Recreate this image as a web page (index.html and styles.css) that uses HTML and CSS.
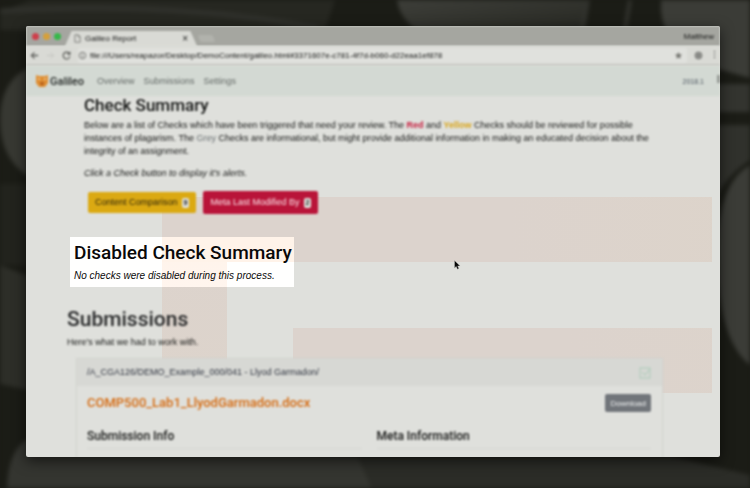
FILE: index.html
```html
<!DOCTYPE html>
<html lang="en">
<head>
<meta charset="utf-8">
<meta name="viewport" content="width=device-width, initial-scale=1">
<title>Galileo Report</title>
<link rel="stylesheet" href="styles.css">
</head>
<body>
<svg class="wallpaper" viewBox="0 0 750 488" preserveAspectRatio="none" aria-hidden="true">
  <defs>
    <linearGradient id="shade" x1="0" y1="0" x2="1" y2="1"><stop offset="0" stop-color="#3d3e39"/><stop offset="1" stop-color="#272822"/></linearGradient>
  </defs>
  <rect width="750" height="488" fill="#1b1c16"/>
  <path d="M30 0H335L325 30H0V12Z" fill="#262721"/>
  <path d="M0 11Q170 0 318 28" fill="none" stroke="#30312c" stroke-width="5"/>
  <path d="M397 0Q400 20 420 32H585L590 0Z" fill="url(#shade)"/>
  <path d="M587 0L582 30M630 0L625 30" stroke="#31322d" stroke-width="4"/>
  <path d="M661 0Q658 42 700 64L750 78V0Z" fill="#3b3c37"/>
  <path d="M715 84H750V112H715Z" fill="#33342f"/>
  <path d="M715 125H750V160Q728 174 715 198Z" fill="#30312c"/>
  <path d="M750 165Q715 185 718 260Q718 340 750 365Z" fill="#3b3c37"/>
  <path d="M28 68Q0 82 0 120Q0 158 28 176Z" fill="#373832"/>
  <path d="M0 184H28V265H0Z" fill="#22231d"/>
  <path d="M0 265L28 276V390L0 384Z" fill="#2d2e28"/>
  <path d="M26 440Q8 452 7 488H372L358 456Z" fill="#343530"/>
  <path d="M358 456H670L750 475V488H372Z" fill="#2b2c27"/>
</svg>

<div class="window">
  <header class="tabs soft">
    <span class="lights"><i class="light red"></i><i class="light amber"></i><i class="light green"></i></span>
    <div class="tab">
      <svg class="page-icon" viewBox="0 0 8 10" aria-hidden="true"><path d="M1 .8h3.8L7 3v6.2H1zM4.8.8V3H7" fill="none" stroke="#777873"/></svg>
      <span class="tab-title">Galileo Report</span>
      <button class="plain" aria-label="Close tab">×</button>
    </div>
    <span class="new-tab"></span>
    <span class="profile">Matthew</span>
  </header>

  <div class="toolbar soft">
    <button class="plain" aria-label="Back"><svg viewBox="0 0 10 10"><path d="M9 5H1.5M5 1.5L1.5 5 5 8.5" fill="none" stroke="#62635f" stroke-width="1.4"/></svg></button>
    <button class="plain dim" aria-label="Forward"><svg viewBox="0 0 10 10"><path d="M1 5h7.5M5 1.5L8.500 5 5 8.500" fill="none" stroke="#92938f"/></svg></button>
    <button class="plain" aria-label="Reload"><svg viewBox="0 0 10 10"><path d="M8.300 3A3.800 3.800 0 1 0 8.800 6M8.800 .8V3.500H6" fill="none" stroke="#5b5c58" stroke-width="1.300"/></svg></button>
    <div class="address">
      <svg viewBox="0 0 10 10" aria-hidden="true"><circle cx="5" cy="5" r="3.600" fill="none" stroke="#666763"/><path d="M5 4.500V7M5 2.800V3.600" stroke="#666763"/></svg>
      <input type="text" aria-label="Address" value="file:///Users/reapazor/Desktop/DemoContent/galileo.html#3371607e-c781-4f7d-b060-d22eaa1ef878">
      <svg viewBox="0 0 10 10" aria-hidden="true"><path d="M5 1l1.200 2.600 2.800.3-2.100 1.900.6 2.800L5 7.200 2.500 8.600l.6-2.800L1 3.900l2.800-.3z" fill="#777873"/></svg>
    </div>
    <svg class="extension" viewBox="0 0 10 10" aria-hidden="true"><circle cx="5" cy="5" r="3.800" fill="#a0a19d" stroke="#696a66"/><path d="M3 5h4M5 3v4" stroke="#696a66"/></svg>
    <button class="plain narrow" aria-label="Menu">⋮</button>
  </div>

  <nav class="navbar soft">
    <a class="brand" href="#"><svg viewBox="0 0 12 14" aria-hidden="true"><path d="M0 1l3 1h6l3-1v8L9 13H3L0 9z" fill="#df8e32"/><path d="M2 4h2v2H2zM8 4h2v2H8z" fill="#e9bd85"/><path d="M4 8h4v2L6 12 4 10z" fill="#b9631c"/></svg>Galileo</a>
    <a href="#">Overview</a>
    <a href="#">Submissions</a>
    <a href="#">Settings</a>
    <span class="version">2018.1</span>
    <span class="thumb"></span>
  </nav>

  <main class="content">
    <section class="summary soft">
      <h2>Check Summary</h2>
      <p>Below are a list of Checks which have been triggered that need your review. The <b class="danger">Red</b> and <b class="warning">Yellow</b> Checks should be reviewed for possible<br>instances of plagarism. The <span class="muted">Grey</span> Checks are informational, but might provide additional information in making an educated decision about the<br>integrity of an assignment.</p>
      <p><em>Click a Check button to display it's alerts.</em></p>
      <div class="checks">
        <button class="check check-warning">Content Comparison <span class="count">9</span></button>
        <button class="check check-danger">Meta Last Modified By <span class="count">2</span></button>
      </div>
    </section>

    <section class="spotlight">
      <h2>Disabled Check Summary</h2>
      <p><em>No checks were disabled during this process.</em></p>
    </section>

    <section class="submissions soft">
      <h1>Submissions</h1>
      <p>Here's what we had to work with.</p>
      <article class="card">
        <header class="card-head">
          <span>/A_CGA126/DEMO_Example_000/041 - Llyod Garmadon/</span>
          <svg viewBox="0 0 12 12" aria-hidden="true"><path d="M1 1h10v10H1zM3 5l3 3 5-6" fill="none" stroke="#b9cfc1" stroke-width="1.300"/></svg>
        </header>
        <div class="card-body">
          <div class="file"><a href="#">COMP500_Lab1_LlyodGarmadon.docx</a><button class="download">Download</button></div>
          <div class="columns"><h3>Submission Info</h3><h3>Meta Information</h3></div>
        </div>
      </article>
    </section>
  </main>
</div>

<svg class="cursor" viewBox="0 0 7 10" aria-hidden="true"><path d="M.5.5v7.400l1.700-1.500 1.200 2.800 1.500-.6-1.200-2.700h2.400z" fill="#080808" stroke="#c8c9c4" stroke-width=".4"/></svg>
</body>
</html>
```
FILE: styles.css
```css
* { box-sizing: border-box; }

body {
  margin: 0;
  height: 100vh;
  padding: 26px 30px 31px 26px;
  overflow: hidden;
  background: #1b1c16;
  color: #141514;
  font: 9px/13px "Liberation Sans", Arial, sans-serif;
}

h1, h2, h3, p { margin: 0; font-weight: 400; }
h1, h2, h3, .brand, .file a { font-family: Roboto, "Liberation Sans", sans-serif; font-weight: 500; }
a { color: inherit; text-decoration: none; }
button, input { font: inherit; color: inherit; border: 0; padding: 0; background: none; }
svg { display: block; flex: none; }

.soft { filter: blur(1px); }

.wallpaper {
  position: absolute;
  inset: 0;
  width: 100%;
  height: 100%;
  filter: blur(2px);
}

.window {
  position: relative;
  display: flex;
  flex-direction: column;
  height: 100%;
  overflow: hidden;
  border-radius: 2px;
  background: #dfe0dc;
  box-shadow: 0 4px 14px #0009;
}

.tabs {
  display: flex;
  flex: none;
  align-items: flex-end;
  height: 20px;
  padding: 0 6px;
  background: #a5a6a0;
  font-size: 8px;
}
.lights { display: flex; gap: 4px; align-self: center; margin-right: 4px; }
.light { width: 7px; height: 7px; border-radius: 50%; }
.red { background: #ce3f4b; }
.amber { background: #d6a03a; }
.green { background: #36b849; }
.tab {
  display: flex;
  align-items: center;
  gap: 4px;
  width: 132px;
  height: 15px;
  padding: 0 9px 0 9px;
  background: #d9dad5;
  clip-path: polygon(5% 0, 95% 0, 100% 100%, 0 100%);
}
.page-icon { width: 7px; height: 9px; }
.tab-title { flex: 1; white-space: nowrap; }
.tab button { font-size: 10px; }
.new-tab {
  width: 15px;
  height: 7px;
  margin: 0 0 4px 2px;
  border-radius: 2px;
  background: #b1b2ac;
  transform: skewX(20deg);
}
.profile { align-self: center; margin-left: auto; }

.toolbar {
  display: flex;
  flex: none;
  align-items: center;
  gap: 7px;
  height: 20px;
  padding: 0 6px 0 4px;
  border-bottom: 2px solid #c8c9c4;
  background: #d9dad5;
}
.plain { flex: none; }
.toolbar svg { width: 9px; height: 9px; }
.dim { opacity: 0.3; }
.narrow { width: 4px; line-height: 10px; }
.address {
  display: flex;
  flex: 1;
  align-items: center;
  gap: 3px;
  height: 15px;
  padding: 0 4px 0 0;
  border-radius: 2px;
  background: #e0e1dd;
  font-size: 8px;
}
.address input { flex: 1; min-width: 0; height: 13px; }

.navbar {
  display: flex;
  flex: none;
  align-items: center;
  gap: 9px;
  height: 30px;
  padding-left: 10px;
  background: #d3d9d3;
  color: #646a67;
}
.brand {
  display: flex;
  align-items: center;
  gap: 2px;
  margin-right: 4px;
  color: #242826;
  font-size: 11px;
}
.brand svg { width: 12px; height: 14px; }
.version { margin-left: auto; font-size: 7px; color: #4d5660; }
.thumb { align-self: flex-start; width: 3px; height: 8px; margin: 9px 0 0 4px; background: #969b96; }

.content {
  flex: 1;
  min-height: 0;
  margin-right: 8px;
  overflow: hidden;
  background:
    linear-gradient(90deg, #dcd3cd 50%, #ddd4c9) 136px 101px / 100% 65px no-repeat,
    linear-gradient(#dcd3cd, #ddd4cb) 136px 101px / 65px 262px no-repeat,
    linear-gradient(90deg, #dcd3cd 40%, #ddd4c9) 267px 232px / 100% 65px no-repeat;
}

.summary { padding-left: 58px; white-space: nowrap; }
.summary h2 { font-size: 17px; line-height: 18px; }
.summary p { margin-top: 5px; }
.summary p + p { margin-top: 9px; }
.danger { color: #c51f3f; }
.warning { color: #d9a51b; }
.muted { color: #6a7073; }
.checks { display: flex; align-items: center; gap: 7px; padding: 11px 0 0 4px; }
.check {
  display: flex;
  align-items: center;
  gap: 4px;
  height: 21px;
  padding: 0 7px;
  border-radius: 2px;
}
.check-warning { background: #dba912; color: #2c240c; }
.check-danger { height: 23px; background: #b91439; color: #fbe8ec; }
.count {
  padding: 0 2px;
  border-radius: 2px;
  background: #e0e1dd;
  color: #1c1d1c;
  font-size: 7px;
  font-weight: 700;
  line-height: 10px;
}

.spotlight {
  width: fit-content;
  margin: 23px 0 0 44px;
  padding: 4px 2px 5px 4px;
  color: #090909;
  white-space: nowrap;
  background:
    linear-gradient(#fff3e9, #fff3e9) 92px 0 / 100% 25px no-repeat,
    linear-gradient(#fff3e9, #fff5ee) 92px 0 / 65px 100% no-repeat,
    #fffffe;
}
.spotlight h2 { font-size: 19px; line-height: 24px; }
.spotlight p { margin-top: 4px; font-size: 10px; }

.submissions { padding: 19px 49px 0 41px; }
.submissions h1 { font-size: 21px; line-height: 26px; color: #28292a; }
.submissions > p { margin-top: 4px; }
.card {
  margin: 9px 0 0 9px;
  border: 1px solid #d2d3cf;
  background: #dfe0dc;
}
.card-head {
  display: flex;
  align-items: center;
  justify-content: space-between;
  height: 27px;
  padding: 0 11px 0 10px;
  background: #d7d8d4;
  color: #2f3440;
}
.card-head svg { width: 12px; height: 12px; }
.card-body { padding: 8px 11px 40px 10px; }
.file { display: flex; align-items: center; justify-content: space-between; }
.file a { color: #d5690e; font-size: 13px; line-height: 18px; }
.download {
  height: 18px;
  padding: 0 5px;
  border-radius: 2px;
  background: #71757a;
  color: #f0f2f2;
  font-size: 8px;
}
.columns { display: grid; grid-template-columns: 1fr 1fr; column-gap: 15px; margin-top: 16px; }
.columns h3 { padding-bottom: 4px; border-bottom: 1px solid #d5d6d2; font-size: 12px; line-height: 16px; }

.cursor { position: absolute; left: 454px; top: 260px; width: 7px; height: 10px; }
```
